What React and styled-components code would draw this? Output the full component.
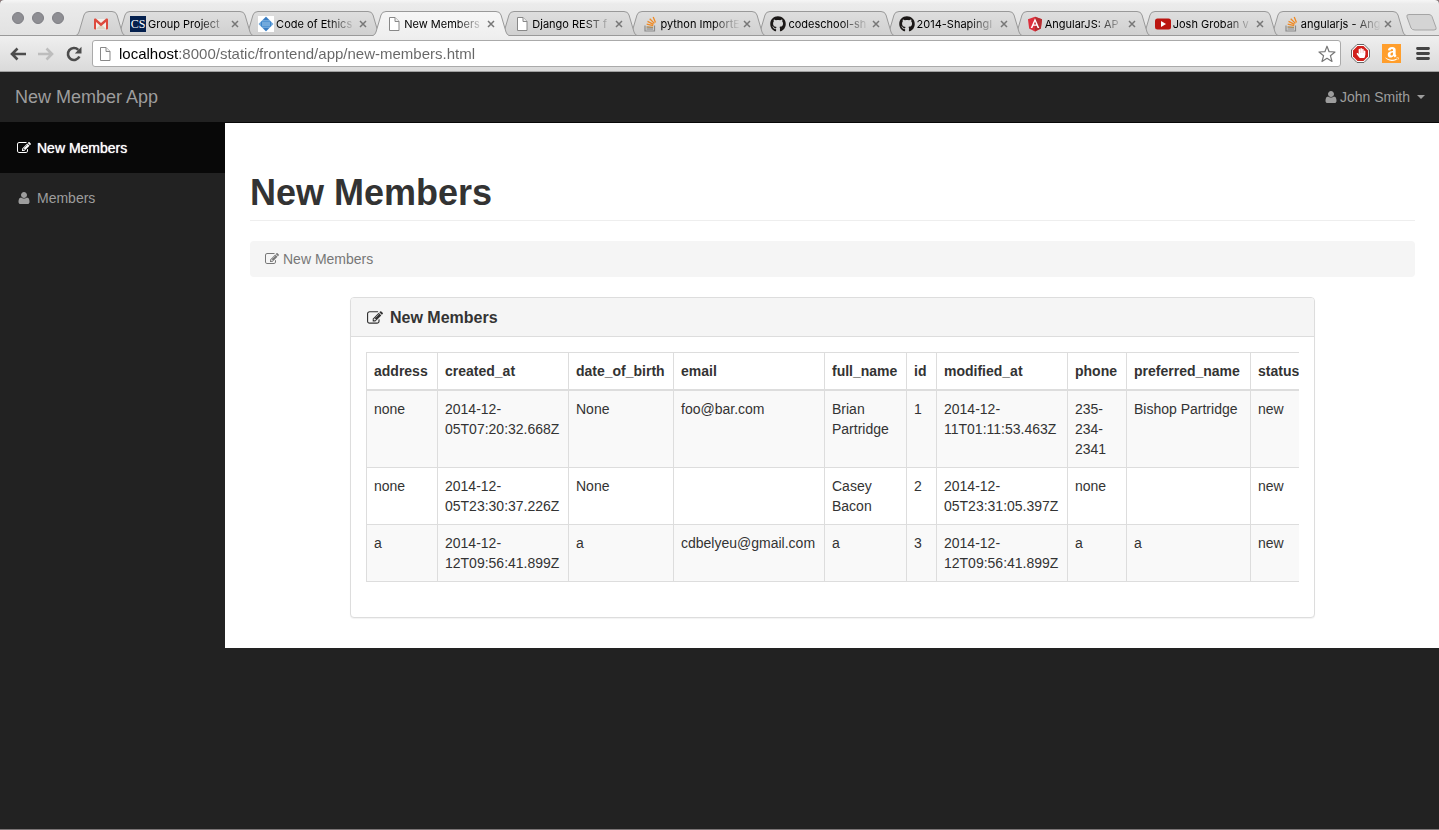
import React from "react";
import styled, { createGlobalStyle } from "styled-components";
import { FaAmazon, FaGithub, FaHandPaper } from "react-icons/fa";

const GlobalStyle = createGlobalStyle`
  * { box-sizing: border-box; }
  body {
    margin: 0;
    background: #8d7476;
    color: #333;
    font: 14px/20px "Liberation Sans", Arial, sans-serif;
  }
  button, input { font: inherit; }
  a { text-decoration: none; color: inherit; }
  svg { display: block; flex: none; }
`;

/* ---------- Browser window ---------- */

const BrowserWindow = styled.div`
  display: flex;
  flex-direction: column;
  min-height: 100vh;
  border-bottom: 1px solid #7b7576;
  border-radius: 4px 4px 0 0;
  overflow: hidden;
  background: #222;
`;

const TabStrip = styled.div`
  display: flex;
  align-items: flex-end;
  height: 36px;
  padding-left: 12px;
  border-bottom: 1px solid #999;
  background: linear-gradient(#f6f6f6 0, #ebebeb 4px, #e2e2e2);
`;

const WindowControls = styled.div`
  display: flex;
  gap: 8px;
  height: 36px;
  padding-top: 13px;
  margin-right: 12px;
`;

const WindowButton = styled.button`
  width: 12px;
  height: 12px;
  padding: 0;
  border: 1px solid #7e7e84;
  border-radius: 50%;
  background: #8e8e93;
`;

const Tabs = styled.div`
  display: flex;
  flex: 0 1 1330px;
  min-width: 0;
  margin-bottom: -1px;
`;

const TabShell = styled.div`
  position: relative;
  z-index: ${(p) => p.$layer};
  display: flex;
  flex: ${(p) => (p.$pinned ? "0 0 49px" : "1 1 136px")};
  min-width: 0;
  height: 25px;
  & + & { margin-left: -8px; }
`;

const TabBody = styled.div`
  display: flex;
  flex: 1;
  align-items: center;
  gap: 2px;
  min-width: 0;
  border-top: 1px solid #999;
  border-bottom: 1px solid ${(p) => (p.$active ? "#efefef" : "#999")};
  background: ${(p) =>
    p.$active ? "linear-gradient(#f6f6f6, #efefef)" : "linear-gradient(#dedede, #d0d0d0)"};
`;

const TabLink = styled.a`
  display: flex;
  flex: 1;
  align-items: center;
  justify-content: ${(p) => (p.$pinned ? "center" : "flex-start")};
  gap: 2px;
  min-width: 0;
`;

const TabTitle = styled.span`
  flex: 1;
  min-width: 0;
  overflow: hidden;
  white-space: nowrap;
  font: 11px/16px Inter, "Liberation Sans", sans-serif;
  color: #000;
  mask-image: linear-gradient(to right, #000 65%, transparent);
`;

const CloseButton = styled.button`
  display: grid;
  place-items: center;
  width: 10px;
  height: 16px;
  padding: 0;
  border: 0;
  background: none;
`;

const NewTabButton = styled.button`
  height: 24px;
  padding: 0;
  border: 0;
  background: none;
`;

const Toolbar = styled.div`
  display: flex;
  align-items: center;
  height: 36px;
  padding: 0 7px 0 10px;
  border-bottom: 1px solid #a0a0a0;
  background: linear-gradient(#efefef, #dadada);
`;

const ToolButton = styled.button`
  display: grid;
  place-items: center;
  width: 16px;
  height: 20px;
  margin-right: 12px;
  padding: 0;
  border: 0;
  background: none;
`;

const AddressBar = styled.form`
  display: flex;
  flex: 1;
  align-items: center;
  gap: 6px;
  height: 27px;
  margin: 0 10px 0 -2px;
  padding: 0 4px;
  border: 1px solid #aaa;
  border-radius: 3px;
  background: #fff;
`;

const AddressInput = styled.input`
  flex: 1;
  min-width: 0;
  padding: 0;
  border: 0;
  outline: 0;
  font: 15px/20px "Liberation Sans", Arial, sans-serif;
  color: transparent;
  background: linear-gradient(to right, #000 59px, #666 59px);
  background-clip: text;
`;

const StarButton = styled.button`
  padding: 0;
  border: 0;
  background: none;
`;

const Extensions = styled.div`
  display: flex;
  align-items: center;
  gap: 12px;
`;

const IconButton = styled.button`
  display: grid;
  place-items: center;
  width: 19px;
  height: 19px;
  padding: 0;
  border: 0;
  color: #fff;
  background: ${(p) => p.$fill || "none"};
`;

/* ---------- Favicons ---------- */

const SchoolMark = styled.span`
  display: grid;
  flex: none;
  place-items: center;
  width: 16px;
  height: 16px;
  font: 12px/16px "Liberation Serif", serif;
  color: #fff;
  background: #04204e;
`;

const GmailIcon = () => (
  <svg width="14" height="12" viewBox="0 0 14 12" role="img" aria-label="Gmail">
    <path d="M0 1h14v10.500H0z" fill="#f3efe9" />
    <path d="M2 11l5-5 5 5z" fill="#ddd5c5" />
    <path d="M0 1.500Q0 .5 1 .5h.8L7 5 12.200.5h.8q1 0 1 1v9q0 1-1 1h-1V4L7 8.300 2 4v7.500H1q-1 0-1-1z" fill="#dd4b3e" />
  </svg>
);

const DiamondIcon = () => (
  <svg width="16" height="16" viewBox="0 0 16 16">
    <path d="M0 0h16v16H0z" fill="#fff" />
    <path d="M8 .5L15.500 8 8 15.500.5 8z" fill="#6fa6da" />
    <path d="M8 1l3 3H5zM8 15l3-3H5z" fill="#3b7cc0" />
    <path d="M3 5.500h10v5H3z" fill="#3c86cc" />
    <path d="M4 7h8M4 9h8" stroke="#a9cdec" />
  </svg>
);

const PageIcon = () => (
  <svg width="16" height="16" viewBox="0 0 16 16">
    <path d="M3.500 1.500h5.500l4 4v9H3.500z" fill="#fff" stroke="#888" />
    <path d="M9 1.500v4h4" fill="#eee" stroke="#888" />
  </svg>
);

const StackIcon = () => (
  <svg width="16" height="16" viewBox="0 0 16 16" fill="none">
    <path d="M3 9.500v5.500h9.500V9.500" stroke="#8a8a8a" strokeWidth="1.200" />
    <path d="M4.500 13h6.500" stroke="#8a8a8a" strokeWidth="1.200" />
    <path d="M4.500 11l6.500.4" stroke="#a98a5c" strokeWidth="1.300" />
    <path d="M4.700 8.200l6.500 1.500M5.500 5.300l6 3M7.700 2.800l4.700 4.600M11.200 1l2.300 5.600" stroke="#f08a24" strokeWidth="1.300" />
  </svg>
);

const AngularIcon = () => (
  <svg width="16" height="16" viewBox="0 0 16 16">
    <path d="M8 .8l7 2.400-1.100 9.200L8 15.500l-5.900-3.100L1 3.200z" fill="#dd2f3c" />
    <path d="M8 .8l7 2.400-1.100 9.200L8 15.500z" fill="#b52e31" />
    <path d="M8 2.300L3.700 12h1.700l.9-2.200h3.400l.9 2.200h1.700zM8 5.500l1.200 2.900H6.800z" fill="#fff" fillRule="evenodd" />
  </svg>
);

const VideoIcon = () => (
  <svg width="16" height="16" viewBox="0 0 16 16">
    <rect y="2.500" width="16" height="11" rx="2.500" fill="#bb1510" />
    <path d="M6 5l5 3-5 3z" fill="#fff" />
  </svg>
);

const GithubIcon = () => <FaGithub size={16} color="#1b1817" />;

/* ---------- Toolbar drawings ---------- */

const TabEdge = ({ side, active }) => {
  const id = `tab-${side}-${active ? "on" : "off"}`;
  const line = "M0 24.500Q2 24 3 21L8 4Q9 .5 13 .5";
  return (
    <svg
      width="13"
      height="25"
      viewBox="0 0 13 25"
      transform={side === "right" ? "scale(-1 1)" : undefined}
    >
      <defs>
        <linearGradient id={id} x2="0" y2="1">
          <stop stopColor={active ? "#f6f6f6" : "#dedede"} />
          <stop offset="1" stopColor={active ? "#efefef" : "#d0d0d0"} />
        </linearGradient>
      </defs>
      <path d={line + "V25H0z"} fill={`url(#${id})`} />
      <path d={line} fill="none" stroke="#999" />
      {!active && <path d="M0 24.500h13" stroke="#999" />}
    </svg>
  );
};

const CloseIcon = () => (
  <svg width="8" height="8" viewBox="0 0 8 8">
    <path d="M1 1l6 6M7 1L1 7" stroke="#777" strokeWidth="1.500" />
  </svg>
);

const ArrowIcon = ({ color, forward }) => (
  <svg width="16" height="14" viewBox="0 0 16 14" fill="none" stroke={color} strokeWidth="2.600">
    <path d={forward ? "M0 7h13.500M8.500 1.500L14 7l-5.500 5.500" : "M16 7H2.500M7.500 1.500L2 7l5.500 5.500"} />
  </svg>
);

const ReloadIcon = () => (
  <svg width="16" height="16" viewBox="0 0 16 16">
    <path d="M12.300 3.800A6 6 0 1 0 13.400 10.500" fill="none" stroke="#4c4c4c" strokeWidth="2.600" />
    <path d="M15.500.8v6.700H8.800z" fill="#4c4c4c" />
  </svg>
);

const StarIcon = () => (
  <svg width="18" height="18" viewBox="0 0 18 18">
    <path
      d="M9 1.200l2.100 5.500 5.900.3-4.600 3.700 1.600 5.800L9 13.300l-5 3.200 1.600-5.800L1 7l5.900-.3z"
      fill="#fff"
      stroke="#777"
      strokeWidth="1.200"
      strokeLinejoin="round"
    />
  </svg>
);

const BlockIcon = () => (
  <svg width="19" height="19" viewBox="0 0 19 19">
    <path d="M6 .5h7L18.500 6v7L13 18.500H6L.5 13V6z" fill="#fff" stroke="#666" />
    <path d="M6.500 2h6L17 6.500v6L12.500 17h-6L2 12.500v-6z" fill="#d2201b" />
    <FaHandPaper x="5" y="4" size={10} color="#fff" />
  </svg>
);

const MenuIcon = () => (
  <svg width="14" height="13" viewBox="0 0 14 13">
    <path d="M1.500 1.500h11M1.500 6.500h11M1.500 11.500h11" stroke="#444" strokeWidth="2.800" strokeLinecap="round" />
  </svg>
);

const NewTabIcon = () => (
  <svg width="31" height="18" viewBox="0 0 31 18">
    <path d="M3 .5h20q2 0 3 2l4 11q1 2.500-2 2.500H9q-3 0-4-2L1 3Q0 .5 3 .5z" fill="#d4d4d4" stroke="#a5a5a5" />
  </svg>
);

/* ---------- Application icons ---------- */

const EDIT_PATH =
  "M888 1184l116-116-152-152-116 116v56h96v96h56zm440-720q-16-16-33 1l-350 350q-17 17-1 33t33-1l350-350q17-17 1-33zm80 594v190q0 119-84.500 203.500t-203.500 84.500h-832q-119 0-203.500-84.500t-84.500-203.500v-832q0-119 84.500-203.500t203.500-84.500h832q63 0 117 25 15 7 18 23 3 17-9 29l-49 49q-14 14-32 8-23-6-45-6h-832q-66 0-113 47t-47 113v832q0 66 47 113t113 47h832q66 0 113-47t47-113v-126q0-13 9-22l64-64q15-15 35-7t20 29zm-96-738l288 288-672 672h-288v-288zm444 132l-92 92-288-288 92-92q28-28 68-28t68 28l152 152q28 28 28 68t-28 68z";
const USER_PATH =
  "M1600 1405q0 120-73 189.500t-194 69.500h-874q-121 0-194-69.500t-73-189.500q0-53 3.500-103.500t14-109 26.500-108.500 43-97.500 62-81 85.500-53.500 111.500-20q9 0 42 21.500t74.500 48 108 48 133.500 21.500 133.500-21.500 108-48 74.500-48 42-21.500q61 0 111.500 20t85.500 53.500 62 81 43 97.500 26.500 108.500 14 109 3.500 103.500zm-320-893q0 159-112.500 271.500t-271.500 112.500-271.500-112.500-112.500-271.500 112.500-271.500 271.500-112.500 271.500 112.500 112.500 271.500z";

const Glyph = ({ path, size = 14 }) => (
  <svg width={size} height={size} viewBox="0 0 1792 1792" fill="currentColor" aria-hidden="true">
    <path d={path} />
  </svg>
);

/* ---------- Application layout ---------- */

const Navbar = styled.header`
  display: flex;
  align-items: center;
  justify-content: space-between;
  height: 51px;
  padding: 0 14px 0 15px;
  border-bottom: 1px solid #080808;
  color: #9d9d9d;
  background: #222;
`;

const Brand = styled.a`
  font-size: 18px;
`;

const UserMenu = styled.button`
  display: flex;
  align-items: center;
  gap: 2px;
  padding: 0;
  border: 0;
  color: inherit;
  background: none;
`;

const Caret = styled.span`
  margin-left: 5px;
  border: 4px solid transparent;
  border-top-color: currentColor;
  border-bottom: 0;
`;

const Columns = styled.div`
  display: flex;
  align-items: flex-start;
  flex: 1;
`;

const Sidebar = styled.nav`
  flex: 0 0 225px;
`;

const SidebarLink = styled.a`
  display: flex;
  align-items: center;
  gap: 6px;
  height: 50px;
  padding: 0 17px;
  color: ${(p) => (p.$active ? "#fff" : "#9d9d9d")};
  background: ${(p) => (p.$active ? "#080808" : "transparent")};
  text-shadow: ${(p) => (p.$active ? "0 0 1px #fff" : "none")};
`;

const Main = styled.main`
  flex: 1;
  min-width: 0;
  padding: 50px 24px 30px 25px;
  background: #fff;
`;

const PageTitle = styled.h1`
  margin: 0 0 20px;
  padding-bottom: 7px;
  border-bottom: 1px solid #eee;
  font-size: 36px;
  line-height: 40px;
`;

const Breadcrumb = styled.nav`
  display: flex;
  align-items: center;
  gap: 4px;
  margin-bottom: 20px;
  padding: 8px 15px;
  border-radius: 4px;
  color: #777;
  background: #f5f5f5;
`;

const Panel = styled.section`
  margin: 0 100px;
  border: 1px solid #ddd;
  border-radius: 4px;
  background: #fff;
  box-shadow: 0 1px 1px rgba(0, 0, 0, 0.05);
`;

const PanelTitle = styled.h2`
  display: flex;
  align-items: center;
  gap: 7px;
  margin: 0;
  padding: 11px 16px 9px;
  border-bottom: 1px solid #ddd;
  border-radius: 3px 3px 0 0;
  font-size: 16px;
  line-height: 18px;
  background: #f5f5f5;
`;

const TableScroller = styled.div`
  margin: 15px 15px 35px;
  overflow-x: auto;
  scrollbar-width: none;
`;

const Table = styled.table`
  width: 946px;
  table-layout: fixed;
  border: 1px solid #ddd;
  border-collapse: collapse;
`;

const Column = styled.col`
  width: ${(p) => p.$width}px;
`;

const HeaderCell = styled.th`
  padding: 8px 7px;
  border: 1px solid #ddd;
  border-bottom-width: 2px;
  text-align: left;
  vertical-align: bottom;
`;

const Row = styled.tr`
  &:nth-child(odd) { background: #f9f9f9; }
`;

const Cell = styled.td`
  padding: 8px 7px;
  border: 1px solid #ddd;
  vertical-align: top;
`;

/* ---------- Data ---------- */

const tabs = [
  { title: "Gmail", icon: <GmailIcon />, pinned: true },
  { title: "Group Project", icon: <SchoolMark>CS</SchoolMark> },
  { title: "Code of Ethics", icon: <DiamondIcon /> },
  { title: "New Members", icon: <PageIcon />, active: true },
  { title: "Django REST f", icon: <PageIcon /> },
  { title: "python ImportE", icon: <StackIcon /> },
  { title: "codeschool-sh", icon: <GithubIcon /> },
  { title: "2014-ShapingI", icon: <GithubIcon /> },
  { title: "AngularJS: AP", icon: <AngularIcon /> },
  { title: "Josh Groban v", icon: <VideoIcon /> },
  { title: "angularjs - Ang", icon: <StackIcon /> },
];

const columns = [
  ["address", 71],
  ["created_at", 131],
  ["date_of_birth", 105],
  ["email", 151],
  ["full_name", 82],
  ["id", 30],
  ["modified_at", 131],
  ["phone", 59],
  ["preferred_name", 124],
  ["status", 62],
];

const members = [
  ["none", "2014-12-05T07:20:32.668Z", "None", "foo@bar.com", "Brian Partridge", "1", "2014-12-11T01:11:53.463Z", "235-234-2341", "Bishop Partridge", "new"],
  ["none", "2014-12-05T23:30:37.226Z", "None", "", "Casey Bacon", "2", "2014-12-05T23:31:05.397Z", "none", "", "new"],
  ["a", "2014-12-12T09:56:41.899Z", "a", "cdbelyeu@gmail.com", "a", "3", "2014-12-12T09:56:41.899Z", "a", "a", "new"],
];

const Tab = ({ title, icon, pinned, active, layer }) => (
  <TabShell $pinned={pinned} $layer={active ? 20 : layer}>
    <TabEdge side="left" active={active} />
    <TabBody $active={active}>
      <TabLink href="#" title={title} $pinned={pinned}>
        {icon}
        {!pinned && <TabTitle>{title}</TabTitle>}
      </TabLink>
      {!pinned && (
        <CloseButton aria-label={`Close ${title}`}>
          <CloseIcon />
        </CloseButton>
      )}
    </TabBody>
    <TabEdge side="right" active={active} />
  </TabShell>
);

export default function App() {
  return (
    <BrowserWindow>
      <GlobalStyle />
      <TabStrip>
        <WindowControls>
          <WindowButton aria-label="Close window" />
          <WindowButton aria-label="Minimize window" />
          <WindowButton aria-label="Zoom window" />
        </WindowControls>
        <Tabs>
          {tabs.map((tab, i) => (
            <Tab key={tab.title} {...tab} layer={tabs.length - i} />
          ))}
        </Tabs>
        <NewTabButton aria-label="New tab">
          <NewTabIcon />
        </NewTabButton>
      </TabStrip>
      <Toolbar>
        <ToolButton aria-label="Back"><ArrowIcon color="#4c4c4c" /></ToolButton>
        <ToolButton aria-label="Forward"><ArrowIcon color="#bdbdbd" forward /></ToolButton>
        <ToolButton aria-label="Reload"><ReloadIcon /></ToolButton>
        <AddressBar onSubmit={(e) => e.preventDefault()}>
          <PageIcon />
          <AddressInput
            aria-label="Address"
            defaultValue="localhost:8000/static/frontend/app/new-members.html"
          />
          <StarButton type="button" aria-label="Bookmark this page"><StarIcon /></StarButton>
        </AddressBar>
        <Extensions>
          <IconButton aria-label="Ad blocker"><BlockIcon /></IconButton>
          <IconButton aria-label="Amazon" $fill="#ff9e2c"><FaAmazon size={16} /></IconButton>
          <IconButton aria-label="Menu"><MenuIcon /></IconButton>
        </Extensions>
      </Toolbar>

      <Navbar>
        <Brand href="#">New Member App</Brand>
        <UserMenu>
          <Glyph path={USER_PATH} />
          John Smith
          <Caret />
        </UserMenu>
      </Navbar>
      <Columns>
        <Sidebar>
          <SidebarLink href="#" $active>
            <Glyph path={EDIT_PATH} />
            New Members
          </SidebarLink>
          <SidebarLink href="#">
            <Glyph path={USER_PATH} />
            Members
          </SidebarLink>
        </Sidebar>
        <Main>
          <PageTitle>New Members</PageTitle>
          <Breadcrumb aria-label="Breadcrumb">
            <Glyph path={EDIT_PATH} />
            New Members
          </Breadcrumb>
          <Panel>
            <PanelTitle>
              <Glyph path={EDIT_PATH} size={16} />
              New Members
            </PanelTitle>
            <TableScroller>
              <Table>
                <colgroup>
                  {columns.map(([name, width]) => (
                    <Column key={name} $width={width} />
                  ))}
                </colgroup>
                <thead>
                  <tr>
                    {columns.map(([name]) => (
                      <HeaderCell key={name} scope="col">{name}</HeaderCell>
                    ))}
                  </tr>
                </thead>
                <tbody>
                  {members.map((member) => (
                    <Row key={member[5]}>
                      {member.map((value, i) => (
                        <Cell key={columns[i][0]}>{value}</Cell>
                      ))}
                    </Row>
                  ))}
                </tbody>
              </Table>
            </TableScroller>
          </Panel>
        </Main>
      </Columns>
    </BrowserWindow>
  );
}
